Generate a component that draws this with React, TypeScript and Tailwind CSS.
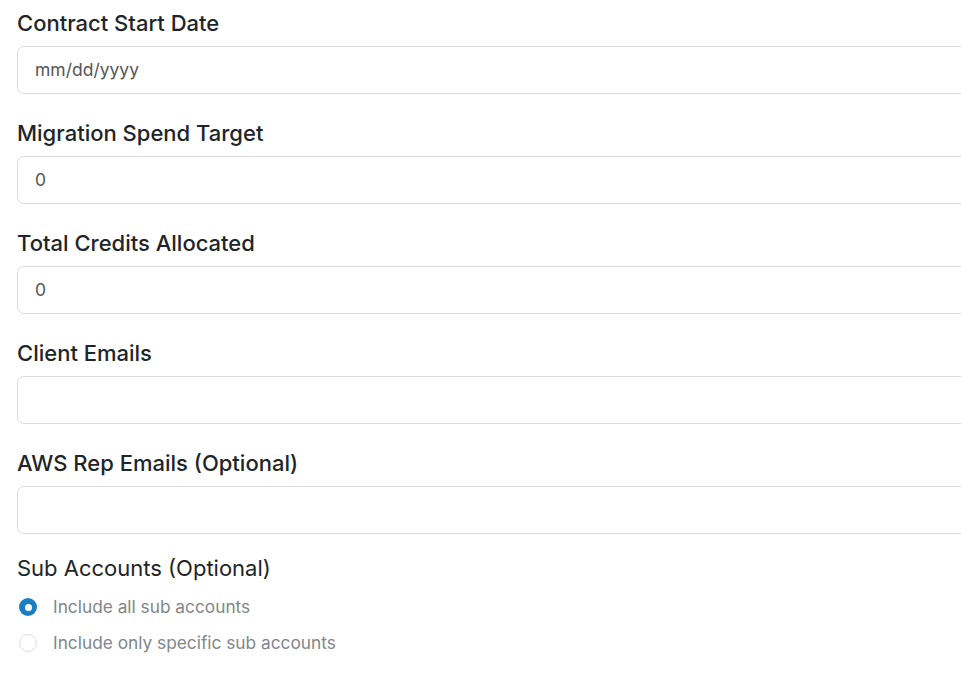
import React from "react";

const fields = [
  { label: "Contract Start Date", placeholder: "mm/dd/yyyy", value: "" },
  { label: "Migration Spend Target", placeholder: "", value: "0" },
  { label: "Total Credits Allocated", placeholder: "", value: "0" },
  { label: "Client Emails", placeholder: "", value: "" },
  { label: "AWS Rep Emails (Optional)", placeholder: "", value: "" },
];

export default function App() {
  return (
    <div
      className="h-[679px] w-[961px] overflow-hidden bg-white pl-[17px] pt-2"
      style={{ fontFamily: "Inter, 'Noto Sans', sans-serif" }}
    >
      {fields.map((f) => (
        <div key={f.label} className="mb-6">
          <label className="mb-2 block text-[22px] leading-[30px] font-medium text-[#212529]">
            {f.label}
          </label>
          <div className="flex h-12 w-[1000px] items-center rounded-[7px] border border-[#dcdcdc] bg-white pl-[17px] pt-[1px] text-[17.5px] text-[#555]">
            {f.value || f.placeholder}
          </div>
        </div>
      ))}

      <div className="-mt-[5px]">
        <div className="mb-[6px] text-[22px] leading-[30px] text-[#212529]">
          Sub Accounts (Optional)
        </div>
        <div className="flex h-9 items-center gap-[16px] pl-[2px]">
          <span className="flex h-[18px] w-[18px] items-center justify-center rounded-full bg-[#1a7fc1]">
            <span className="h-[7px] w-[7px] rounded-full bg-white" />
          </span>
          <span className="text-[17.3px] text-[#80868b]">Include all sub accounts</span>
        </div>
        <div className="flex h-9 items-center gap-[16px] pl-[2px]">
          <span className="h-[18px] w-[18px] rounded-full border border-[#dedede]" />
          <span className="text-[17.3px] text-[#80868b]">Include only specific sub accounts</span>
        </div>
      </div>
    </div>
  );
}
